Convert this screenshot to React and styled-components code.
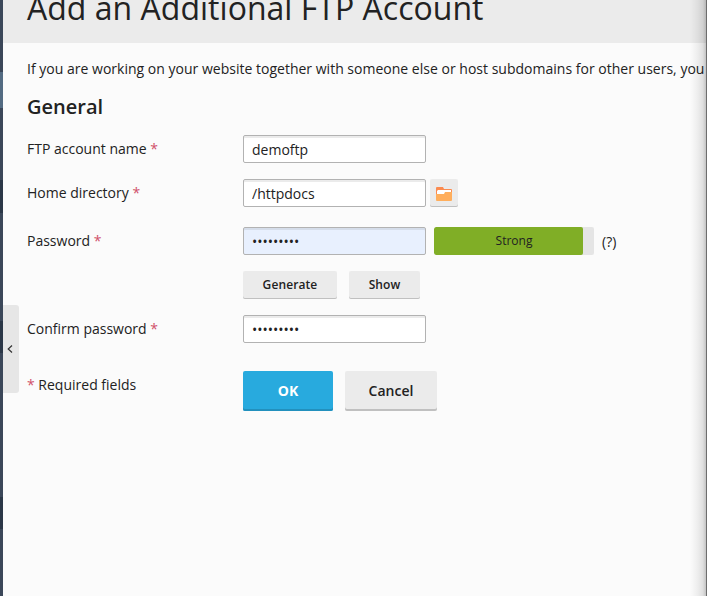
import React from 'react';
import styled, { createGlobalStyle } from 'styled-components';

const GlobalStyle = createGlobalStyle`
  *, *::before, *::after { box-sizing: border-box; }
  body { margin: 0; background: #fff; overflow: hidden; }
  button, input { font-family: inherit; margin: 0; }
`;

const Frame = styled.div`
  position: relative;
  display: flex;
  width: 707px;
  height: 596px;
  overflow: hidden;
  background: #fbfbfb;
  border-right: 1px solid #6d6d6d;
  color: #222;
  font: 14px/20px 'Open Sans', sans-serif;
`;

const EdgeShade = styled.div`
  position: absolute;
  top: 0;
  right: 0;
  bottom: 0;
  width: 16px;
  pointer-events: none;
  background: linear-gradient(to right, rgba(0, 0, 0, 0), rgba(0, 0, 0, 0.05) 45%, rgba(0, 0, 0, 0.11) 80%, rgba(0, 0, 0, 0.22));
`;

const Sidebar = styled.aside`
  flex: 0 0 3px;
  background: linear-gradient(
    #3b4759 72px,
    #536b82 72px 108px,
    #3b4759 108px 180px,
    #2b3747 180px 213px,
    #3b4759 213px 321px,
    #2b3747 321px 353px,
    #3b4759 353px 497px,
    #2b3747 497px 529px,
    #3b4759 529px
  );
`;

const CollapseHandle = styled.button`
  position: absolute;
  left: 3px;
  top: 305px;
  display: flex;
  align-items: center;
  justify-content: center;
  width: 16px;
  height: 88px;
  padding: 0 2px 0 0;
  border: 0;
  border-radius: 0 3px 3px 0;
  background: #e6e6e6;
`;

const Main = styled.main`
  flex: 1;
  min-width: 0;
`;

const Header = styled.header`
  display: flex;
  align-items: flex-end;
  height: 43px;
  padding: 0 24px 13px;
  background: #ebebeb;
`;

const Title = styled.h1`
  margin: 0;
  font-size: 32px;
  line-height: 44px;
  font-weight: 400;
  letter-spacing: 0.02px;
  white-space: nowrap;
`;

const Content = styled.div`
  padding: 16px 0 0 24px;
`;

const Intro = styled.p`
  margin: 0;
  letter-spacing: 0.01px;
  white-space: nowrap;
`;

const SectionTitle = styled.h2`
  margin: 14px 0 0;
  font-size: 20px;
  line-height: 28px;
  font-weight: 600;
`;

const Row = styled.div`
  display: flex;
  margin-top: ${(p) => p.$gap}px;
`;

const Label = styled.label`
  flex: 0 0 216px;
  padding-top: 4px;
`;

const Star = styled.span`
  color: #d0506a;
`;

const Input = styled.input`
  width: 183px;
  height: 28px;
  padding: 1px 8px 0;
  border: 1px solid #b2b2b2;
  border-radius: 2px;
  outline: 0;
  background: ${(p) => (p.$filled ? '#e8f0fe' : '#fff')};
  box-shadow: inset 0 2px 0 rgba(0, 0, 0, 0.08);
  color: #222;
  font-size: 14px;
`;

const Button = styled.button`
  width: ${(p) => p.$width}px;
  height: 28px;
  padding: 0 0 1px;
  border: 0;
  border-radius: 2px;
  background: #ebebeb;
  box-shadow: inset 0 -1px 0 #c0c0c0;
  color: #222;
  font-size: 12px;
  font-weight: 600;
  letter-spacing: 0.1px;
`;

const IconButton = styled(Button)`
  display: flex;
  align-items: center;
  justify-content: center;
  margin-left: 4px;
  padding: 2px 0 0;
`;

const ActionButton = styled(Button)`
  height: 40px;
  font-size: 14px;
  letter-spacing: 0;
  font-weight: ${(p) => (p.$primary ? 700 : 600)};
  color: ${(p) => (p.$primary ? '#fff' : '#222')};
  background: ${(p) => (p.$primary ? '#28aade' : '#ebebeb')};
  box-shadow: inset 0 -2px 0 ${(p) => (p.$primary ? '#2290bd' : '#c0c0c0')};
`;

const ButtonGroup = styled.div`
  display: flex;
  gap: 12px;
  margin: ${(p) => p.$top || 0}px 0 0 ${(p) => p.$indent || 0}px;
`;

const Meter = styled.div`
  width: 160px;
  height: 28px;
  margin-left: 8px;
  border-radius: 2px;
  overflow: hidden;
  background: #e5e5e5;
  display: grid;
`;

const MeterFill = styled.div`
  grid-area: 1 / 1;
  width: 149px;
  border-radius: 2px;
  background: #80ae26;
`;

const MeterText = styled.span`
  grid-area: 1 / 1;
  text-align: center;
  font-size: 12px;
  line-height: 28px;
`;

const Hint = styled.span`
  margin: 5px 0 0 8px;
`;

const FolderIcon = () => (
  <svg width="16" height="14" viewBox="0 0 16 14">
    <path d="M0 1a1 1 0 0 1 1-1h6l1 2h7a1 1 0 0 1 1 1v6H0z" fill="#fb8b50" />
    <path d="M1 4l1-1h13v4H1z" fill="#fff" />
    <path d="M0 7h8l1-2h7v8a1 1 0 0 1-1 1H1a1 1 0 0 1-1-1z" fill="#ffae5c" />
  </svg>
);

const Required = () => <Star>*</Star>;

export default function App() {
  return (
    <Frame>
      <GlobalStyle />
      <Sidebar />
      <Main>
        <Header>
          <Title>Add an Additional FTP Account</Title>
        </Header>
        <Content>
          <Intro>
            If you are working on your website together with someone else or host subdomains for other users, you
          </Intro>
          <SectionTitle>General</SectionTitle>
          <Row $gap={14}>
            <Label htmlFor="name">FTP account name <Required /></Label>
            <Input id="name" defaultValue="demoftp" />
          </Row>
          <Row $gap={16}>
            <Label htmlFor="home">Home directory <Required /></Label>
            <Input id="home" defaultValue="/httpdocs" />
            <IconButton $width={28} aria-label="Browse"><FolderIcon /></IconButton>
          </Row>
          <Row $gap={20}>
            <Label htmlFor="password">Password <Required /></Label>
            <Input id="password" type="password" defaultValue="demopass1" $filled />
            <Meter>
              <MeterFill />
              <MeterText>Strong</MeterText>
            </Meter>
            <Hint>(?)</Hint>
          </Row>
          <ButtonGroup $top={16} $indent={216}>
            <Button $width={94}>Generate</Button>
            <Button $width={71}>Show</Button>
          </ButtonGroup>
          <Row $gap={16}>
            <Label htmlFor="confirm">Confirm password <Required /></Label>
            <Input id="confirm" type="password" defaultValue="demopass1" />
          </Row>
          <Row $gap={28}>
            <Label as="div"><Required /> Required fields</Label>
            <ButtonGroup>
              <ActionButton $width={90} $primary>OK</ActionButton>
              <ActionButton $width={92}>Cancel</ActionButton>
            </ButtonGroup>
          </Row>
        </Content>
      </Main>
      <CollapseHandle aria-label="Collapse">
        <svg width="6" height="8" viewBox="0 0 6 8" fill="none" stroke="#333" strokeWidth="1.2">
          <path d="M5 0.5L1.2 4L5 7.5" />
        </svg>
      </CollapseHandle>
      <EdgeShade />
    </Frame>
  );
}
